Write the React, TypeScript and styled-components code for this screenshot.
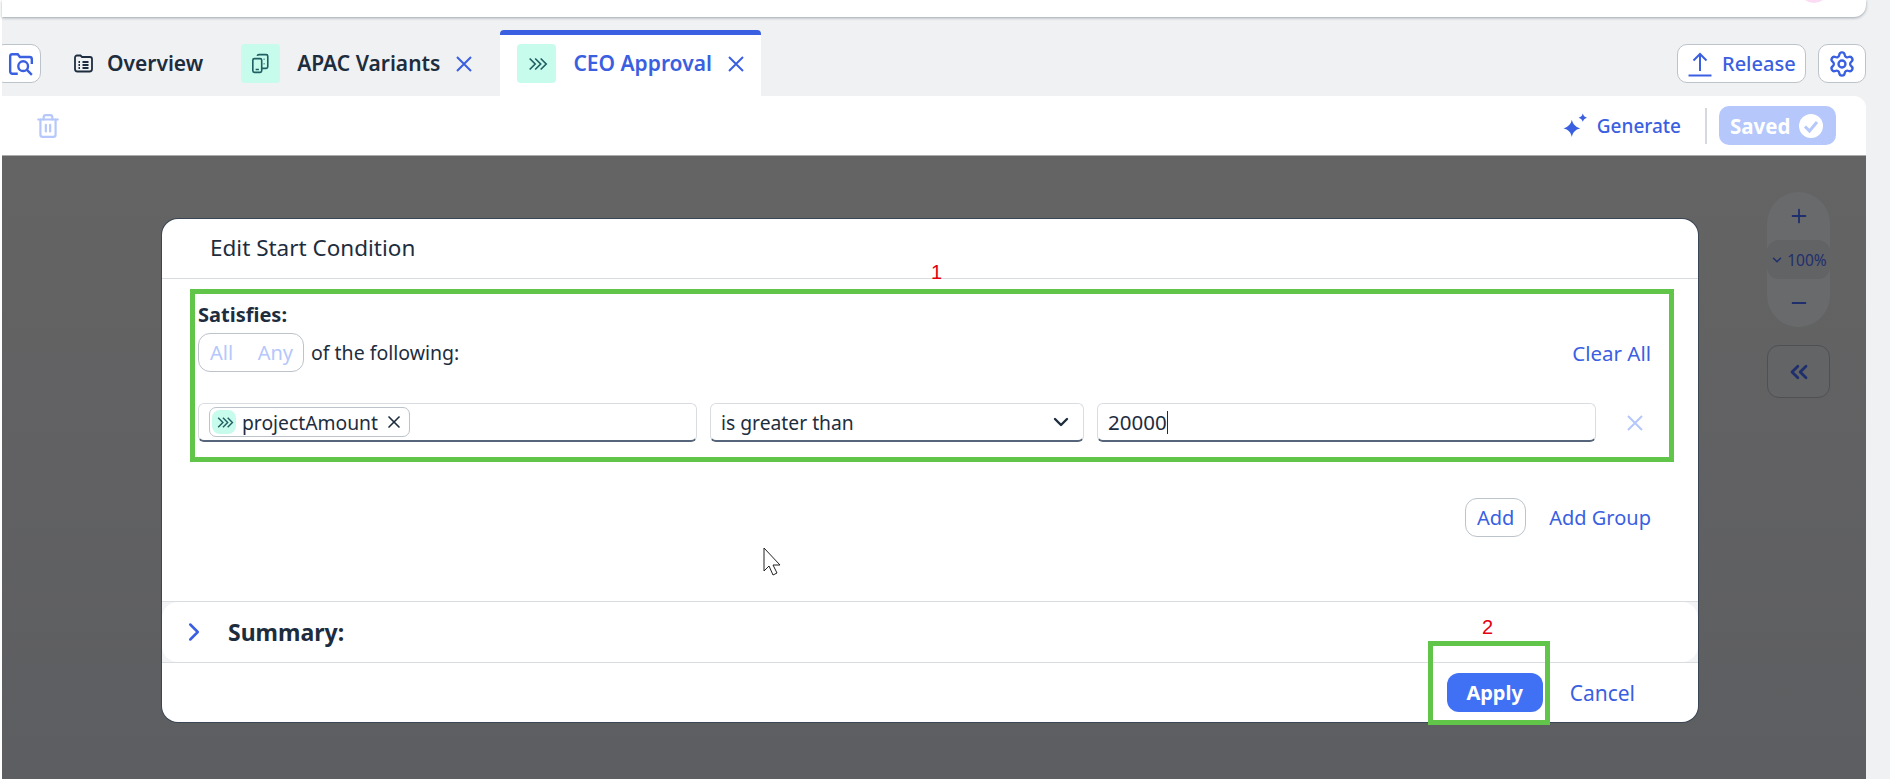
import React from 'react'
import styled, { createGlobalStyle } from 'styled-components'
import { ChevronDown, ChevronRight, ChevronsLeft, Minus, Plus, Settings, Trash2, X } from 'lucide-react'

const blue = '#3a5fe0'
const ink = '#1d2d3e'
const pale = '#b5c7fb'
const line = '#d9dde2'

const Global = createGlobalStyle`
  html, body { margin: 0; padding: 0; background: #fff; }
  body { font-family: "Noto Sans", "Liberation Sans", sans-serif; color: ${ink}; }
  * { box-sizing: border-box; }
`

const Page = styled.div`
  width: 1890px;
  height: 779px;
  overflow: hidden;
  padding-left: 2px;
  background: #fff;
  display: flex;
  flex-direction: column;
`

const Shell = styled.div`
  flex: 1;
  min-height: 0;
  background: #eff1f3;
  padding-right: 24px;
  display: flex;
  flex-direction: column;
  position: relative;
`

const TopBar = styled.div`
  height: 17px;
  background: #fff;
  border-radius: 0 0 12px 0;
  box-shadow: 0 1px 3px rgba(60, 70, 80, 0.45);
  overflow: hidden;
  display: flex;
  justify-content: flex-end;
  padding-right: 37px;
`

const Avatar = styled.div`
  width: 30px;
  height: 30px;
  margin-top: -27px;
  border-radius: 50%;
  background: #fbdcf4;
`

const TabRow = styled.div`
  height: 79px;
  display: flex;
  align-items: flex-end;
  gap: 8px;
  overflow: hidden;
`

const IconButton = styled.div<{ $clip?: boolean }>`
  height: 39px;
  margin-bottom: 13px;
  flex: none;
  width: ${p => (p.$clip ? '47px' : '48px')};
  margin-left: ${p => (p.$clip ? '-8px' : '0')};
  margin-right: ${p => (p.$clip ? '8px' : '0')};
  background: #fff;
  border: 1px solid #bcc3ca;
  border-radius: 10px;
  color: ${blue};
  display: flex;
  align-items: center;
  justify-content: ${p => (p.$clip ? 'flex-end' : 'center')};
  padding-right: ${p => (p.$clip ? '6px' : '0')};
`

const Tab = styled.div<{ $active?: boolean }>`
  height: 66px;
  padding: 0 ${p => (p.$active ? '17px' : '16px')} 13px;
  margin-left: ${p => (p.$active ? '4px' : '0')};
  display: flex;
  align-items: flex-end;
  background: ${p => (p.$active ? '#fff' : 'transparent')};
  border-top: 5px solid ${p => (p.$active ? blue : 'transparent')};
  border-radius: 4px 4px 0 0;
  color: ${p => (p.$active ? blue : ink)};
`

const OverviewTab = styled(Tab)`
  margin-right: -2px;
`

const TabIconBox = styled.div`
  width: 39px;
  height: 39px;
  border-radius: 4px;
  background: #c7fbec;
  color: #1f5f63;
  display: flex;
  align-items: center;
  justify-content: center;
  margin-right: 17px;
`

const PlainTabIcon = styled.div`
  height: 39px;
  width: 21px;
  margin-right: 13px;
  display: flex;
  align-items: center;
  color: ${ink};
`

const TabLabel = styled.div`
  height: 39px;
  line-height: 38px;
  font-size: 21px;
  font-weight: 600;
  white-space: nowrap;
`

const TabClose = styled.div`
  height: 39px;
  margin-left: 16px;
  display: flex;
  align-items: center;
  color: ${blue};
`

const RowSpacer = styled.div`
  flex: 1;
`

const ReleaseButton = styled.div`
  height: 39px;
  width: 129px;
  margin-bottom: 13px;
  margin-right: 4px;
  flex: none;
  background: #fff;
  border: 1px solid #bcc3ca;
  border-radius: 10px;
  color: ${blue};
  font-size: 20px;
  font-weight: 500;
  display: flex;
  align-items: center;
  gap: 9px;
  padding-left: 9px;
`

const Toolbar = styled.div`
  height: 59px;
  background: #fff;
  border-radius: 0 12px 0 0;
  display: flex;
  align-items: center;
  padding: 0 30px 0 33px;
  flex: none;
`

const GenerateLink = styled.div`
  color: ${blue};
  font-size: 19px;
  font-weight: 500;
  display: flex;
  align-items: center;
  gap: 9px;
`

const ToolbarDivider = styled.div`
  width: 2px;
  height: 36px;
  background: #d5d9de;
  margin: 0 12px 0 24px;
`

const SavedBadge = styled.div`
  width: 117px;
  height: 39px;
  border-radius: 10px;
  background: ${pale};
  color: #fff;
  font-size: 20.500px;
  font-weight: 700;
  display: flex;
  align-items: center;
  gap: 9px;
  padding-left: 11px;
`

const Canvas = styled.div`
  flex: 1;
  min-height: 0;
  background: linear-gradient(180deg, #646464 0%, #5d5e61 100%);
  border-top: 1px solid #a9abad;
  display: flex;
  align-items: flex-start;
  padding: 63px 0 0 160px;
`

const Modal = styled.div`
  width: 1536px;
  height: 503px;
  flex: none;
  background: #fff;
  border-radius: 16px;
  box-shadow: 0 0 0 1px #3b4654;
  display: flex;
  flex-direction: column;
  position: relative;
`

const ModalHeader = styled.div`
  height: 60px;
  flex: none;
  border-bottom: 1px solid ${line};
  padding: 0 0 2px 48px;
  display: flex;
  align-items: center;
  font-size: 22.500px;
`

const ConditionBox = styled.div`
  margin: 10px 24px 0 28px;
  height: 173px;
  flex: none;
  border: 5px solid #61c54a;
  padding: 9px 18px 0 3px;
`

const Satisfies = styled.div`
  font-size: 20px;
  font-weight: 700;
  line-height: 24px;
`

const MatchRow = styled.div`
  margin-top: 6px;
  display: flex;
  align-items: center;
`

const Segment = styled.div`
  width: 106px;
  height: 39px;
  border: 1px solid #bcc3ca;
  border-radius: 12px;
  color: ${pale};
  font-size: 20px;
  display: flex;
  align-items: center;
  justify-content: space-between;
  padding: 0 10px 0 11px;
`

const MatchText = styled.div`
  margin-left: 7px;
  font-size: 19.500px;
`

const LinkText = styled.div<{ $size?: number }>`
  color: ${blue};
  font-size: ${p => p.$size ?? 20}px;
  white-space: nowrap;
`

const FieldRow = styled.div`
  margin-top: 31px;
  display: flex;
  align-items: center;
  gap: 13px;
`

const Field = styled.div<{ $w: number }>`
  width: ${p => p.$w}px;
  height: 39px;
  flex: none;
  border: 1px solid ${line};
  border-bottom: 2px solid #56657a;
  border-radius: 6px;
  background: #fff;
  font-size: 19.300px;
  display: flex;
  align-items: center;
  padding: 0 10px;
`

const ValueText = styled.span`
  font-size: 20.500px;
`

const RemoveRow = styled.div`
  margin-left: 18px;
  display: flex;
  color: ${pale};
`

const Token = styled.div`
  height: 30px;
  border: 1px solid #bcc3ca;
  border-radius: 7px;
  padding: 0 5px 0 2px;
  display: flex;
  align-items: center;
  gap: 6px;
`

const TokenIcon = styled.div`
  width: 24px;
  height: 24px;
  border-radius: 8px;
  background: #c7fbec;
  color: #1f5f63;
  display: flex;
  align-items: center;
  justify-content: center;
`

const Caret = styled.span`
  display: inline-block;
  width: 1px;
  height: 23px;
  background: ${ink};
`

const AddRow = styled.div`
  margin: 36px 47px 0 0;
  display: flex;
  justify-content: flex-end;
  align-items: center;
  gap: 23px;
  height: 39px;
`

const OutlineButton = styled.div`
  width: 61px;
  height: 39px;
  border: 1px solid #bcc3ca;
  border-radius: 12px;
  color: ${blue};
  font-size: 20px;
  display: flex;
  align-items: center;
  justify-content: center;
`

const Summary = styled.div`
  margin-top: 64px;
  height: 62px;
  flex: none;
  border-top: 1px solid ${line};
  border-bottom: 1px solid ${line};
  background: #f3f4f6;
`

const SummaryInner = styled.div`
  height: 100%;
  background: #fff;
  border-radius: 16px;
  display: flex;
  align-items: center;
  padding-left: 17px;
  gap: 19px;
  color: ${blue};
`

const SummaryLabel = styled.div`
  color: ${ink};
  font-size: 23px;
  font-weight: 700;
`

const Footer = styled.div`
  flex: 1;
  display: flex;
  justify-content: flex-end;
  align-items: center;
  gap: 27px;
  padding-right: 63px;
`

const ApplyButton = styled.div`
  width: 96px;
  height: 39px;
  background: #4070f4;
  border-radius: 12px;
  color: #fff;
  font-size: 20px;
  font-weight: 700;
  display: flex;
  align-items: center;
  justify-content: center;
`

const ApplyMark = styled.div`
  position: absolute;
  left: 1266px;
  top: 422px;
  width: 122px;
  height: 84px;
  border: 5px solid #61c54a;
`

const Marker = styled.div<{ $x: number; $y: number }>`
  position: absolute;
  left: ${p => p.$x}px;
  top: ${p => p.$y}px;
  color: #e3000f;
  font-family: "Liberation Sans", sans-serif;
  font-size: 20px;
  line-height: 22px;
`

const Pointer = styled.svg`
  position: absolute;
  left: 760px;
  top: 547px;
`

const SideControls = styled.div`
  margin-left: 69px;
  width: 63px;
  flex: none;
  display: flex;
  flex-direction: column;
  gap: 18px;
  margin-top: -27px;
  color: #1f2f6d;
`

const ZoomPill = styled.div`
  height: 135px;
  border-radius: 32px;
  background: #696a6c;
  display: flex;
  flex-direction: column;
  align-items: center;
  justify-content: space-between;
`

const ZoomStep = styled.div`
  height: 48px;
  display: flex;
  align-items: center;
  justify-content: center;
`

const ZoomValue = styled.div`
  width: 100%;
  height: 39px;
  border-radius: 12px;
  background: #626365;
  font-size: 15.500px;
  display: flex;
  align-items: center;
  justify-content: center;
  gap: 3px;
`

const CollapseButton = styled.div`
  height: 53px;
  border: 1px solid #4e5054;
  border-radius: 12px;
  background: #636466;
  display: flex;
  align-items: center;
  justify-content: center;
`

const Chevrons = ({ size }: { size: number }) => (
  <svg width={size} height={size} viewBox="0 0 24 24" fill="none" stroke="currentColor" strokeWidth="1.8">
    <path d="M4 6l6 6-6 6M10 6l6 6-6 6M16 6l6 6-6 6" />
  </svg>
)

const CloseGlyph = () => (
  <svg width="16" height="16" viewBox="0 0 16 16" fill="none" stroke="currentColor" strokeWidth="2">
    <path d="M1 1l14 14M15 1L1 15" />
  </svg>
)

const FolderSearch = () => (
  <svg width="26" height="26" viewBox="0 0 24 24" fill="none" stroke="currentColor" strokeWidth="2.2">
    <path d="M9 21H4a2 2 0 0 1-2-2V5a2 2 0 0 1 2-2h5l2 2.500h9a2 2 0 0 1 2 2V12" />
    <circle cx="14" cy="14" r="4.500" />
    <path d="M17.500 17.500L22 22" />
  </svg>
)

const ListCard = () => (
  <svg width="21" height="21" viewBox="0 0 21 21" fill="none" stroke="currentColor" strokeWidth="1.8">
    <path d="M2 4.500a2 2 0 0 1 2-2h3.500l1.500 1.500h8a2 2 0 0 1 2 2V16a2.500 2.500 0 0 1-2.500 2.500h-12A2.500 2.500 0 0 1 2 16z" />
    <path d="M5.500 9h1.500M5.500 12h1.500M5.500 15h1.500M9.500 9h6M9.500 12h6M9.500 15h6" />
  </svg>
)

const Devices = () => (
  <svg width="19" height="21" viewBox="0 0 22 26" fill="none" stroke="currentColor" strokeWidth="2">
    <rect x="1.500" y="7" width="11" height="17" rx="2" />
    <path d="M7 3.500A2 2 0 0 1 9 2h9a2 2 0 0 1 2 2v13a2 2 0 0 1-2 2h-5.500" />
    <path d="M5 20.500h4M15.500 7v1M15.500 13v1" />
  </svg>
)

const UploadLine = () => (
  <svg width="26" height="26" viewBox="0 0 26 26" fill="none" stroke="currentColor" strokeWidth="2">
    <path d="M13 20V3M6.500 9.500L13 3l6.500 6.500" />
    <path d="M1.500 24.500h23" />
  </svg>
)

const Sparkle = () => (
  <svg width="25" height="25" viewBox="0 0 24 24" fill="currentColor">
    <path d="M8.500 6.500c1 4.300 3.200 6.600 8 8.200-4.800 1.500-7 3.800-8 8.300-1-4.500-3.200-6.800-8-8.300 4.800-1.600 7-3.900 8-8.200z" />
    <path d="M19 .5c.6 2.200 1.700 3.300 4 4-2.300.7-3.400 1.800-4 4-.6-2.200-1.700-3.300-4-4 2.300-.7 3.400-1.800 4-4z" />
  </svg>
)

const SavedCheck = () => (
  <svg width="24" height="24" viewBox="0 0 24 24">
    <circle cx="12" cy="12" r="12" fill="#fff" />
    <path d="M6 12.500l4.500 4.500L18 8" fill="none" stroke={pale} strokeWidth="3" />
  </svg>
)

export default function App() {
  return (
    <Page>
      <Global />
      <Shell>
        <TopBar>
          <Avatar />
        </TopBar>
        <TabRow>
          <IconButton $clip>
            <FolderSearch />
          </IconButton>
          <OverviewTab>
            <PlainTabIcon>
              <ListCard />
            </PlainTabIcon>
            <TabLabel>Overview</TabLabel>
          </OverviewTab>
          <Tab>
            <TabIconBox>
              <Devices />
            </TabIconBox>
            <TabLabel>APAC Variants</TabLabel>
            <TabClose>
              <CloseGlyph />
            </TabClose>
          </Tab>
          <Tab $active>
            <TabIconBox>
              <Chevrons size={22} />
            </TabIconBox>
            <TabLabel>CEO Approval</TabLabel>
            <TabClose>
              <CloseGlyph />
            </TabClose>
          </Tab>
          <RowSpacer />
          <ReleaseButton>
            <UploadLine />
            Release
          </ReleaseButton>
          <IconButton>
            <Settings size={28} strokeWidth={2} />
          </IconButton>
        </TabRow>
        <Toolbar>
          <Trash2 size={26} color={pale} strokeWidth={2} />
          <RowSpacer />
          <GenerateLink>
            <Sparkle />
            Generate
          </GenerateLink>
          <ToolbarDivider />
          <SavedBadge>
            Saved
            <SavedCheck />
          </SavedBadge>
        </Toolbar>
        <Canvas>
          <Modal>
            <ModalHeader>Edit Start Condition</ModalHeader>
            <ConditionBox>
              <Satisfies>Satisfies:</Satisfies>
              <MatchRow>
                <Segment>
                  <span>All</span>
                  <span>Any</span>
                </Segment>
                <MatchText>of the following:</MatchText>
                <RowSpacer />
                <LinkText $size={20.5}>Clear All</LinkText>
              </MatchRow>
              <FieldRow>
                <Field $w={499}>
                  <Token>
                    <TokenIcon>
                      <Chevrons size={19} />
                    </TokenIcon>
                    projectAmount
                    <X size={20} strokeWidth={2} />
                  </Token>
                </Field>
                <Field $w={374}>
                  is greater than
                  <RowSpacer />
                  <ChevronDown size={24} strokeWidth={2.4} />
                </Field>
                <Field $w={499}>
                  <ValueText>20000</ValueText>
                  <Caret />
                </Field>
                <RemoveRow>
                  <CloseGlyph />
                </RemoveRow>
              </FieldRow>
            </ConditionBox>
            <AddRow>
              <OutlineButton>Add</OutlineButton>
              <LinkText>Add Group</LinkText>
            </AddRow>
            <Summary>
              <SummaryInner>
                <ChevronRight size={30} strokeWidth={2} />
                <SummaryLabel>Summary:</SummaryLabel>
              </SummaryInner>
            </Summary>
            <Footer>
              <ApplyButton>Apply</ApplyButton>
              <LinkText $size={21}>Cancel</LinkText>
            </Footer>
            <ApplyMark />
          </Modal>
          <SideControls>
            <ZoomPill>
              <ZoomStep>
                <Plus size={22} strokeWidth={2} />
              </ZoomStep>
              <ZoomValue>
                <ChevronDown size={14} strokeWidth={2.5} />
                100%
              </ZoomValue>
              <ZoomStep>
                <Minus size={22} strokeWidth={2} />
              </ZoomStep>
            </ZoomPill>
            <CollapseButton>
              <ChevronsLeft size={28} strokeWidth={2.4} />
            </CollapseButton>
          </SideControls>
        </Canvas>
        <Marker $x={929} $y={261}>1</Marker>
        <Marker $x={1480} $y={616}>2</Marker>
        <Pointer width="20" height="30" viewBox="0 0 20 30">
          <path d="M2 1v23l5-5 4 9 4-2-4-8h7z" fill="#fff" stroke="#222" strokeWidth="1" />
        </Pointer>
      </Shell>
    </Page>
  )
}
